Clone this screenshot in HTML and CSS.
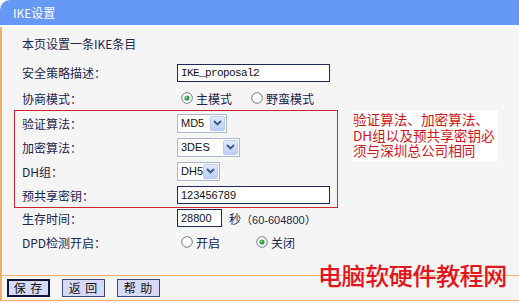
FILE: index.html
```html
<!DOCTYPE html>
<html lang="zh-CN">
 <head>
  <meta charset="utf-8">
  <title>IKE设置</title>
  <link rel="stylesheet" href="styles.css">
 </head>
 <body>
  <div class="panel">
   <div class="head">IKE设置</div>
   <div class="body">
    <div class="row intro">本页设置一条IKE条目</div>
    <div class="row r1">
     <span class="lbl">安全策略描述：</span>
     <span class="txt mono" style="width:153px">IKE_proposal2</span>
    </div>
    <div class="row r2">
     <span class="lbl">协商模式：</span>
     <span class="radio"><svg width="12" height="12" viewBox="0 0 12 12"><circle cx="6" cy="6" r="5.3" fill="#fff" stroke="#6f7f92"/><circle cx="6" cy="6" r="2.6" fill="#2f9d3a"/><circle cx="5.4" cy="5.4" r="0.9" fill="#b8eab8"/></svg>主模式</span>
     <span class="radio gap1"><svg width="12" height="12" viewBox="0 0 12 12"><circle cx="6" cy="6" r="5.3" fill="#fff" stroke="#6f7f92"/></svg>野蛮模式</span>
    </div>
    <div class="group">
     <div class="redbox">
      <div class="row">
       <span class="lbl">验证算法：</span>
       <span class="sel" style="width:50px"><span class="val">MD5</span><span class="drop"><svg width="9" height="6" viewBox="0 0 9 6"><polyline points="1,1 4.5,4.5 8,1" fill="none" stroke="#3f5584" stroke-width="1.8"/></svg></span></span>
      </div>
      <div class="row">
       <span class="lbl">加密算法：</span>
       <span class="sel" style="width:63px"><span class="val">3DES</span><span class="drop"><svg width="9" height="6" viewBox="0 0 9 6"><polyline points="1,1 4.5,4.5 8,1" fill="none" stroke="#3f5584" stroke-width="1.8"/></svg></span></span>
      </div>
      <div class="row">
       <span class="lbl">DH组：</span>
       <span class="sel" style="width:43px"><span class="val">DH5</span><span class="drop"><svg width="9" height="6" viewBox="0 0 9 6"><polyline points="1,1 4.5,4.5 8,1" fill="none" stroke="#3f5584" stroke-width="1.8"/></svg></span></span>
      </div>
      <div class="row">
       <span class="lbl">预共享密钥：</span>
       <span class="txt" style="width:153px">123456789</span>
      </div>
     </div>
     <div class="note">验证算法、加密算法、<br>DH组以及预共享密钥必<br>须与深圳总公司相同</div>
    </div>
    <div class="row r5">
     <span class="lbl">生存时间：</span>
     <span class="txt" style="width:45px">28800</span>
     <span class="unit">秒<span class="small">（60-604800）</span></span>
    </div>
    <div class="row r6">
     <span class="lbl">DPD检测开启：</span>
     <span class="radio"><svg width="12" height="12" viewBox="0 0 12 12"><circle cx="6" cy="6" r="5.3" fill="#fff" stroke="#6f7f92"/></svg>开启</span>
     <span class="radio gap2"><svg width="12" height="12" viewBox="0 0 12 12"><circle cx="6" cy="6" r="5.3" fill="#fff" stroke="#6f7f92"/><circle cx="6" cy="6" r="2.6" fill="#2f9d3a"/><circle cx="5.4" cy="5.4" r="0.9" fill="#b8eab8"/></svg>关闭</span>
    </div>
   </div>
   <div class="foot">
    <span class="btn active">保 存</span>
    <span class="btn">返 回</span>
    <span class="btn">帮 助</span>
   </div>
  </div>
  <div class="mark">电脑软硬件教程网</div>
 </body>
</html>
```

FILE: styles.css
```css
body {
 margin: 0;
 background: #f5f5f5;
 font-family: "Noto Sans CJK SC", "Liberation Sans", sans-serif;
 font-size: 12px;
 color: #1a2550;
 width: 519px;
 height: 303px;
 overflow: hidden;
 position: relative;
}

.head {
 height: 25px;
 background: #6698f8;
 border-top-left-radius: 10px;
 color: #fff;
 line-height: 25px;
 padding-left: 13px;
 border-bottom: 2px solid #fbfbfb;
}

.body {
 border-left: 2px solid #f2b06a;
 height: 248px;
}

.row {
 display: flex;
 align-items: center;
 height: 24px;
 padding-left: 20px;
}

.intro { height: 32px; }
.r1 { height: 27px; }
.r5 { height: 20px; }
.r6 { height: 28px; }

.lbl {
 width: 155px;
 flex: none;
}

.txt {
 box-sizing: border-box;
 height: 18px;
 border: 1px solid #1c2a5a;
 background: #fff;
 padding-left: 3px;
 line-height: 16px;
 font-family: "Liberation Sans", sans-serif;
 font-size: 11px;
 color: #111;
}

.mono {
 font-family: "Liberation Mono", monospace;
 letter-spacing: -0.6px;
}

.radio {
 display: flex;
 align-items: center;
 gap: 3px;
 padding-left: 4px;
}

.gap1 { margin-left: 15px; }
.gap2 { margin-left: 32px; }

.group {
 display: flex;
 align-items: flex-start;
 margin-left: 12px;
 gap: 14px;
}

.redbox {
 width: 324px;
 flex: none;
 box-sizing: border-box;
 border: 1px solid #c8282c;
}

.redbox .row { padding-left: 7px; }

.sel {
 box-sizing: border-box;
 height: 19px;
 border: 1px solid #a9b8cf;
 background: #fff;
 display: flex;
 align-items: center;
 justify-content: space-between;
 padding: 0 1px 0 3px;
}

.val {
 font-family: "Liberation Sans", sans-serif;
 font-size: 11px;
 color: #111;
}

.drop {
 width: 15px;
 height: 15px;
 box-sizing: border-box;
 border: 1px solid #b8cbf2;
 border-radius: 2px;
 background: linear-gradient(#e1eafd, #b9cdf7);
 display: flex;
 align-items: center;
 justify-content: center;
}

.note {
 background: #fff;
 color: #d0141c;
 font-size: 13.6px;
 line-height: 15.5px;
 padding: 2px 3px 2px 1px;
 white-space: nowrap;
}

.unit {
 margin-left: 7px;
}

.small {
 font-family: "Liberation Sans", sans-serif;
 font-size: 11px;
}

.foot {
 border-top: 1px solid #f2b06a;
 border-bottom: 1px solid #f2b06a;
 border-left: 2px solid #f2b06a;
 height: 24px;
 display: flex;
 align-items: center;
 gap: 12px;
 padding-left: 5px;
}

.btn {
 box-sizing: border-box;
 width: 43px;
 height: 18px;
 border: 1px solid #3b4577;
 background: #d7d9f6;
 text-align: center;
 line-height: 16px;
 color: #111;
 letter-spacing: 1px;
}

.btn.active {
 border: 2px solid #0e1535;
 line-height: 14px;
}

.mark {
 position: absolute;
 left: 318px;
 top: 261px;
 color: #e3141c;
 font-size: 24px;
 font-weight: 500;
 line-height: 28px;
 letter-spacing: -0.4px;
}
```
